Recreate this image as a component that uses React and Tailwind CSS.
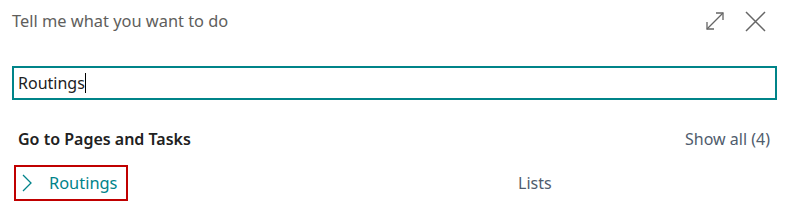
export default function App() {
  return (
    <div
      className="w-[792px] h-[215px] bg-white relative overflow-hidden"
      style={{ fontFamily: '"Noto Sans", "Open Sans", sans-serif' }}
    >
      <div className="flex items-center justify-between pl-[12px] pr-[26px] pt-[9px] h-[33px]">
        <div className="text-[16.4px] leading-[24px] text-[#605e5c]">Tell me what you want to do</div>
        <div className="flex items-center gap-[20px]">
          <svg width="20" height="20" viewBox="0 0 20 20" fill="none" stroke="#666" strokeWidth="1.3">
            <path d="M2 18 L18 2" />
            <path d="M2 11 L2 18 L9 18" />
            <path d="M11 2 L18 2 L18 9" />
          </svg>
          <svg width="21" height="21" viewBox="0 0 21 21" fill="none" stroke="#666" strokeWidth="1.5">
            <path d="M1 1 L20 20 M20 1 L1 20" />
          </svg>
        </div>
      </div>

      <div className="mt-[33px] mx-[12px] w-[765px] h-[34px] border-2 border-[#008489] flex items-center px-[4px]">
        <span className="text-[16px] text-[#212121]">Routings</span>
        <span className="w-[1px] h-[20px] bg-black"></span>
      </div>

      <div className="flex items-center justify-between pl-[18px] pr-[22px] mt-[27px]">
        <div className="text-[16px] font-semibold text-[#212121]">Go to Pages and Tasks</div>
        <div className="text-[16px] text-[#505c6d]">Show all (4)</div>
      </div>

      <div className="flex items-center mt-[14px]">
        <div className="ml-[14px] w-[114px] h-[36px] border-2 border-[#c00000] flex items-center">
          <svg width="12" height="18" viewBox="0 0 12 18" fill="none" stroke="#00838a" strokeWidth="1.3" className="ml-[5px]">
            <path d="M2 1 L10 9 L2 17" />
          </svg>
          <span className="ml-[16px] text-[16.4px] text-[#00838a]">Routings</span>
        </div>
        <div className="ml-[390px] text-[16px] text-[#505c6d]">Lists</div>
      </div>
    </div>
  );
}
